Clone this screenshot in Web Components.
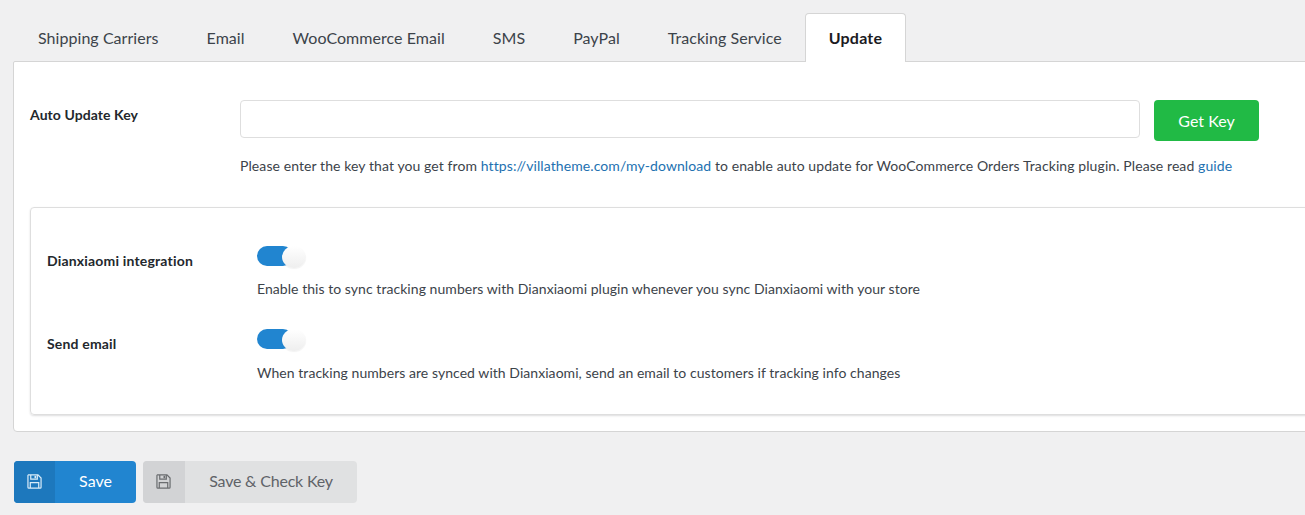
<!DOCTYPE html>
<html>
<head>
<meta charset="utf-8">
<style>
html, body { margin: 0; height: 515px; overflow: hidden; }
body { background: #f0f0f1; font-family: Lato, sans-serif; color: #23282d; }
</style>
</head>
<body>
<settings-page>
  <tab-bar slot="tabs">
    <tab-item>Shipping Carriers</tab-item>
    <tab-item>Email</tab-item>
    <tab-item>WooCommerce Email</tab-item>
    <tab-item>SMS</tab-item>
    <tab-item>PayPal</tab-item>
    <tab-item>Tracking Service</tab-item>
    <tab-item active>Update</tab-item>
  </tab-bar>
  <key-row slot="key"></key-row>
  <sub-panel slot="sub">
    <toggle-row label="Dianxiaomi integration">Enable this to sync tracking numbers with Dianxiaomi plugin whenever you sync Dianxiaomi with your store</toggle-row>
    <toggle-row label="Send email" style="--desc-top:12px">When tracking numbers are synced with Dianxiaomi, send an email to customers if tracking info changes</toggle-row>
  </sub-panel>
  <labeled-button slot="actions" kind="primary" style="width:122px">Save</labeled-button>
  <labeled-button slot="actions" kind="grey" style="width:214px;--side-w:42px;--ls:-.2px">Save &amp; Check Key</labeled-button>
</settings-page>

<script>
const saveIcon = `<svg viewBox="0 0 16 16" width="15" height="15" fill="none" stroke="currentColor">
  <path d="M1.5 1h10.2L15 4.3V14a1 1 0 0 1-1 1H2a1 1 0 0 1-1-1V1.500z" stroke-width="1.300"/>
  <path d="M4 1v4.500h7V1" stroke-width="1.300"/>
  <rect x="8" y="2" width="1.800" height="2.500" fill="currentColor" stroke="none"/>
  <path d="M3.500 15V9.200h9V15" stroke-width="1.300"/>
</svg>`;

class SettingsPage extends HTMLElement {
  constructor() {
    super();
    this.attachShadow({ mode: "open" }).innerHTML = `
    <style>
      :host { display: block; padding: 13px 0 0 13px; width: 1360px; box-sizing: border-box; }
      .panel {
        background: #fff;
        border: 1px solid #d5d5d5;
        border-radius: 0 0 4px 4px;
        border-top-left-radius: 2px;
        height: 371px;
        box-sizing: border-box;
        padding: 38px 16px 16px;
        margin-top: -1px;
      }
      .actions { display: flex; gap: 7px; margin-top: 29px; margin-left: 1px; }
    </style>
    <slot name="tabs"></slot>
    <div class="panel">
      <slot name="key"></slot>
      <slot name="sub"></slot>
    </div>
    <div class="actions"><slot name="actions"></slot></div>`;
  }
}

class TabBar extends HTMLElement {
  constructor() {
    super();
    this.attachShadow({ mode: "open" }).innerHTML = `
    <style>
      :host { display: flex; position: relative; z-index: 1; padding-left: 1px; height: 49px; }
    </style>
    <slot></slot>`;
  }
}

class TabItem extends HTMLElement {
  constructor() {
    super();
    this.attachShadow({ mode: "open" }).innerHTML = `
    <style>
      :host {
        display: flex;
        align-items: center;
        box-sizing: border-box;
        height: 49px;
        padding: 0 23px 2px;
        font-size: 16px;
        letter-spacing: .05px;
        color: #3c434a;
        border: 1px solid transparent;
        border-bottom: 0;
        white-space: nowrap;
      }
      :host([active]) {
        background: #fff;
        border-color: #d5d5d5;
        border-radius: 4px 4px 0 0;
        color: #1b1b1f;
        font-weight: 700;
        letter-spacing: .2px;
        margin-left: -1px;
      }
    </style>
    <slot></slot>`;
  }
}

class KeyRow extends HTMLElement {
  constructor() {
    super();
    this.attachShadow({ mode: "open" }).innerHTML = `
    <style>
      :host { display: grid; grid-template-columns: 210px 1fr; height: 107px; font-size: 14px; }
      .label { font-weight: 700; color: #23282d; font-size: 14px; padding-top: 6px; line-height: 18px; letter-spacing: .07px; }
      .line { display: flex; gap: 14px; }
      .input {
        width: 900px; height: 38px; box-sizing: border-box;
        background: #fff; border: 1px solid #dedede; border-radius: 4px;
      }
      .get {
        width: 105px; height: 41px; background: #21ba45; color: #fff;
        border-radius: 4px; display: flex; align-items: center; justify-content: center;
        font-size: 16px;
      }
      p { margin: 15px 0 0; line-height: 20px; color: #3c434a; white-space: nowrap; letter-spacing: .09px; }
      a { color: #2271b1; text-decoration: none; }
    </style>
    <div class="label">Auto Update Key</div>
    <div>
      <div class="line"><div class="input"></div><div class="get">Get Key</div></div>
      <p>Please enter the key that you get from <a>https://villatheme.com/my-download</a> to enable auto update for WooCommerce Orders Tracking plugin. Please read <a>guide</a></p>
    </div>`;
  }
}

class SubPanel extends HTMLElement {
  constructor() {
    super();
    this.attachShadow({ mode: "open" }).innerHTML = `
    <style>
      :host {
        display: block; box-sizing: border-box; height: 208px;
        border: 1px solid #dedede; border-radius: 4px;
        box-shadow: 0 1px 2px rgba(34,36,38,.15);
        padding: 37px 16px 0;
      }
    </style>
    <slot></slot>`;
  }
}

class ToggleRow extends HTMLElement {
  constructor() {
    super();
    this.attachShadow({ mode: "open" }).innerHTML = `
    <style>
      :host { display: grid; grid-template-columns: 210px 1fr; height: 83px; font-size: 14px; }
      .label { font-weight: 700; color: #23282d; padding-top: 7px; line-height: 18px; letter-spacing: .18px; }
      .toggle { position: relative; width: 49px; height: 22px; }
      .track { width: 36px; height: 20px; background: #2185d0; border-radius: 10px; margin-top: 1px; }
      .knob {
        position: absolute; left: 25px; top: 0; width: 24px; height: 22px; border-radius: 50%;
        background: linear-gradient(#fff, #eee);
        box-shadow: 0 1px 1px rgba(34,36,38,.06);
      }
      p { margin: var(--desc-top, 11px) 0 0; line-height: 20px; color: #3c434a; white-space: nowrap; letter-spacing: .05px; }
    </style>
    <div class="label">${this.getAttribute("label")}</div>
    <div>
      <div class="toggle"><div class="track"></div><div class="knob"></div></div>
      <p><slot></slot></p>
    </div>`;
  }
}

class LabeledButton extends HTMLElement {
  constructor() {
    super();
    this.attachShadow({ mode: "open" }).innerHTML = `
    <style>
      :host {
        display: flex; height: 42px; box-sizing: border-box; border-radius: 4px; overflow: hidden;
        font-size: 16px; letter-spacing: var(--ls, 0);
      }
      :host([kind=primary]) { background: #2185d0; color: #fff; --side: #1d78bd; --ic: #d8ebf8; }
      :host([kind=grey]) { background: #e0e1e2; color: #5f6368; --side: #d2d3d5; --ic: #6b6d70; }
      .ic { width: var(--side-w, 41px); flex: none; background: var(--side); color: var(--ic); display: flex; align-items: center; justify-content: center; padding: 0 1px 1px 0; box-sizing: border-box; }
      .txt { flex: 1; display: flex; align-items: center; justify-content: center; padding-bottom: 3px; }
    </style>
    <div class="ic">${saveIcon}</div>
    <div class="txt"><slot></slot></div>`;
  }
}

customElements.define("settings-page", SettingsPage);
customElements.define("tab-bar", TabBar);
customElements.define("tab-item", TabItem);
customElements.define("key-row", KeyRow);
customElements.define("sub-panel", SubPanel);
customElements.define("toggle-row", ToggleRow);
customElements.define("labeled-button", LabeledButton);
</script>
</body>
</html>
